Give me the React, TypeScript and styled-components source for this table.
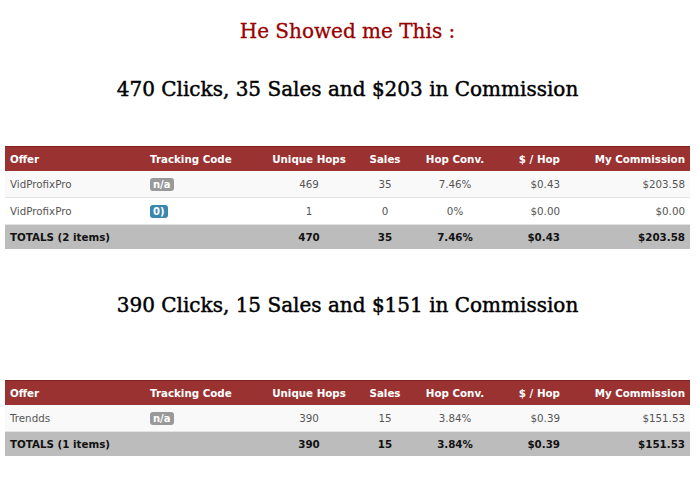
import styled, { createGlobalStyle } from "styled-components";

const GlobalStyle = createGlobalStyle`
  body {
    margin: 0;
    background: #fff;
  }
`;

type Row = {
  offer: string;
  code: string;
  codeKind: "none" | "info";
  hops: string;
  sales: string;
  conv: string;
  perHop: string;
  commission: string;
};

type Report = {
  heading: string;
  rows: Row[];
  totals: Omit<Row, "offer" | "code" | "codeKind">;
};

const reports: Report[] = [
  {
    heading: "470 Clicks, 35 Sales and $203 in Commission",
    rows: [
      { offer: "VidProfixPro", code: "n/a", codeKind: "none", hops: "469", sales: "35", conv: "7.46%", perHop: "$0.43", commission: "$203.58" },
      { offer: "VidProfixPro", code: "0)", codeKind: "info", hops: "1", sales: "0", conv: "0%", perHop: "$0.00", commission: "$0.00" },
    ],
    totals: { hops: "470", sales: "35", conv: "7.46%", perHop: "$0.43", commission: "$203.58" },
  },
  {
    heading: "390 Clicks, 15 Sales and $151 in Commission",
    rows: [
      { offer: "Trendds", code: "n/a", codeKind: "none", hops: "390", sales: "15", conv: "3.84%", perHop: "$0.39", commission: "$151.53" },
    ],
    totals: { hops: "390", sales: "15", conv: "3.84%", perHop: "$0.39", commission: "$151.53" },
  },
];

const Page = styled.div`
  padding: 0 7px 0 5px;
  font-family: "DejaVu Sans", Verdana, sans-serif;
`;

const Title = styled.h2`
  margin: 0;
  padding-top: 18px;
  text-align: center;
  font-family: "DejaVu Serif", "Liberation Serif", serif;
  font-weight: normal;
  font-size: 20px;
  line-height: 26px;
  color: #990000;
  -webkit-text-stroke: 0.3px #990000;
`;

const Heading = styled.h3<{ $top: number }>`
  margin: 0;
  padding-top: ${(p) => p.$top}px;
  text-align: center;
  font-family: "DejaVu Serif", "Liberation Serif", serif;
  font-weight: normal;
  font-size: 20px;
  line-height: 30px;
  color: #000;
  -webkit-text-stroke: 0.45px #000;
`;

const Table = styled.table<{ $top: number }>`
  margin-top: ${(p) => p.$top}px;
  width: 100%;
  border-collapse: collapse;
  table-layout: fixed;
  font-size: 10.3px;
`;

const Th = styled.th<{ $align?: string }>`
  background: #9a3232;
  color: #fff;
  font-weight: bold;
  text-align: ${(p) => p.$align || "left"};
  padding: 0 5px;
  height: 24px;
  border-top: 1px solid #7d2222;
`;

const Tr = styled.tr<{ $shade?: boolean }>`
  background: ${(p) => (p.$shade ? "#f9f9f9" : "#fff")};
  border-bottom: 1px solid #e4e4e4;
`;

const Td = styled.td<{ $align?: string }>`
  color: #555;
  text-align: ${(p) => p.$align || "left"};
  padding: 0 5px;
  height: 26px;
`;

const TotalRow = styled.tr`
  background: #bcbcbc;
`;

const TotalCell = styled.td<{ $align?: string }>`
  color: #111;
  font-weight: bold;
  text-align: ${(p) => p.$align || "left"};
  padding: 0 5px;
  height: 24px;
`;

const Badge = styled.span<{ $kind: "none" | "info" }>`
  display: inline-block;
  padding: 1px 3px;
  border-radius: 3px;
  font-size: 10px;
  line-height: 11px;
  font-weight: bold;
  color: #fff;
  background: ${(p) => (p.$kind === "info" ? "#3a87ad" : "#999")};
`;

const cols = [
  { label: "Offer", width: 140, align: "left" },
  { label: "Tracking Code", width: 120, align: "left" },
  { label: "Unique Hops", width: 88, align: "center" },
  { label: "Sales", width: 64, align: "center" },
  { label: "Hop Conv.", width: 76, align: "center" },
  { label: "$ / Hop", width: 72, align: "right" },
  { label: "My Commission", width: 125, align: "right" },
];

function ReportTable({ report, top }: { report: Report; top: number }) {
  const t = report.totals;
  return (
    <Table $top={top}>
      <colgroup>
        {cols.map((c) => (
          <col key={c.label} style={{ width: c.width }} />
        ))}
      </colgroup>
      <thead>
        <tr>
          {cols.map((c) => (
            <Th key={c.label} $align={c.align}>
              {c.label}
            </Th>
          ))}
        </tr>
      </thead>
      <tbody>
        {report.rows.map((r, i) => (
          <Tr key={i} $shade={i % 2 === 0}>
            <Td>{r.offer}</Td>
            <Td>
              <Badge $kind={r.codeKind}>{r.code}</Badge>
            </Td>
            <Td $align="center">{r.hops}</Td>
            <Td $align="center">{r.sales}</Td>
            <Td $align="center">{r.conv}</Td>
            <Td $align="right">{r.perHop}</Td>
            <Td $align="right">{r.commission}</Td>
          </Tr>
        ))}
        <TotalRow>
          <TotalCell colSpan={2}>TOTALS ({report.rows.length} items)</TotalCell>
          <TotalCell $align="center">{t.hops}</TotalCell>
          <TotalCell $align="center">{t.sales}</TotalCell>
          <TotalCell $align="center">{t.conv}</TotalCell>
          <TotalCell $align="right">{t.perHop}</TotalCell>
          <TotalCell $align="right">{t.commission}</TotalCell>
        </TotalRow>
      </tbody>
    </Table>
  );
}

export default function App() {
  return (
    <Page>
      <GlobalStyle />
      <Title>He Showed me This :</Title>
      <Heading $top={30}>{reports[0].heading}</Heading>
      <ReportTable report={reports[0]} top={42} />
      <Heading $top={41}>{reports[1].heading}</Heading>
      <ReportTable report={reports[1]} top={60} />
    </Page>
  );
}
